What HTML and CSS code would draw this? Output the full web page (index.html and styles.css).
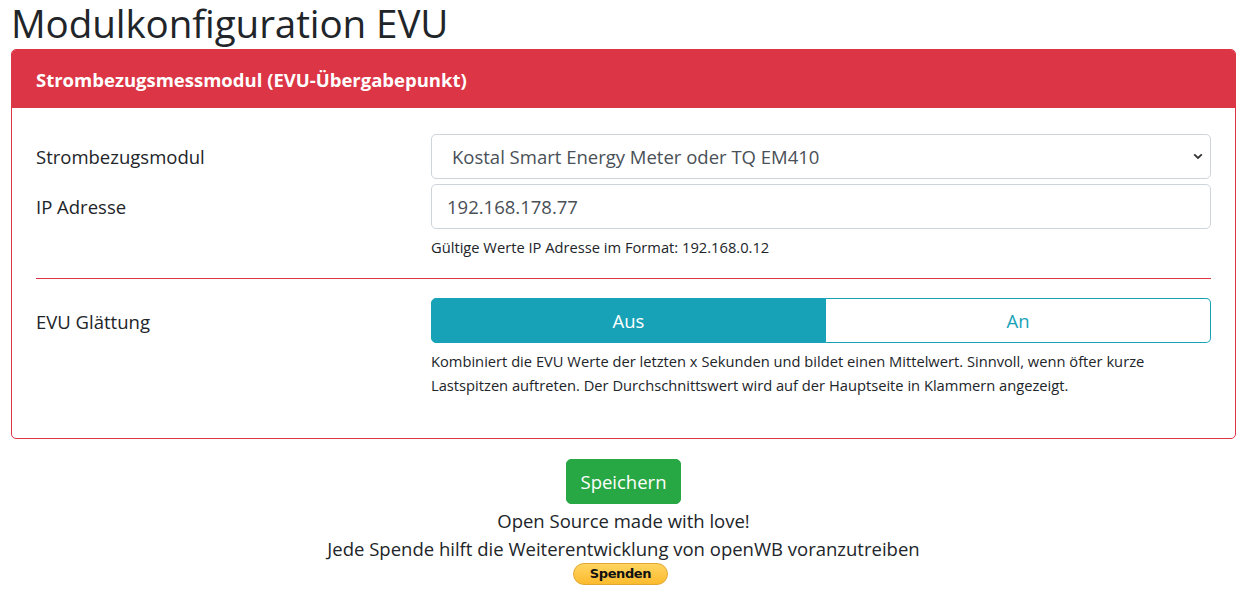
FILE: index.html
```html
<!DOCTYPE html>
<html lang="de">
<head>
<meta charset="utf-8">
<title>Modulkonfiguration EVU</title>
<link rel="stylesheet" href="styles.css">
</head>
<body>
<div class="page">
  <h1 class="title">Modulkonfiguration EVU</h1>
  <div class="card">
    <div class="card-header">Strombezugsmessmodul (EVU-Übergabepunkt)</div>
    <div class="card-body">
      <div class="form-row">
        <label class="label" for="modul">Strombezugsmodul</label>
        <div class="control">
          <div class="select-wrap">
            <select id="modul" class="field select">
              <option>Kostal Smart Energy Meter oder TQ EM410</option>
            </select>
            <svg class="chevron" width="10" height="7" viewBox="0 0 10 7"><path d="M1.2 1.3 L5 5 L8.8 1.3" fill="none" stroke="#333" stroke-width="1.8"/></svg>
          </div>
        </div>
      </div>
      <div class="form-row row-tight">
        <label class="label" for="ip">IP Adresse</label>
        <div class="control">
          <input id="ip" class="field input" type="text" value="192.168.178.77">
          <div class="help help-ip">Gültige Werte IP Adresse im Format: 192.168.0.12</div>
        </div>
      </div>
      <div class="divider"></div>
      <div class="form-row">
        <div class="label label-toggle">EVU Glättung</div>
        <div class="control">
          <div class="toggle">
            <button class="tbtn active">Aus</button>
            <button class="tbtn">An</button>
          </div>
          <div class="help help-desc">Kombiniert die EVU Werte der letzten x Sekunden und bildet einen Mittelwert. Sinnvoll, wenn öfter kurze Lastspitzen auftreten. Der Durchschnittswert wird auf der Hauptseite in Klammern angezeigt.</div>
        </div>
      </div>
    </div>
  </div>
  <div class="footer">
    <button class="save">Speichern</button>
    <div class="foot-line">Open Source made with love!</div>
    <div class="foot-line">Jede Spende hilft die Weiterentwicklung von openWB voranzutreiben</div>
    <button class="donate">Spenden</button>
  </div>
</div>
</body>
</html>
```
FILE: styles.css
```css
* { box-sizing: border-box; }
html, body { margin: 0; padding: 0; background: #fff; }
body {
  font-family: "Open Sans", "Noto Sans", sans-serif;
  color: #212529;
  font-size: 18.5px;
  line-height: 27px;
}
.page {
  width: 1256px;
  padding: 0 20px 0 11px;
}
.title {
  margin: 0 0 2px;
  font-size: 38.6px;
  font-weight: 500;
  line-height: 47px;
  letter-spacing: -0.1px;
}
.card {
  border: 1px solid #dc3545;
  border-radius: 5px;
  overflow: hidden;
}
.card-header {
  background: #dc3545;
  color: #fff;
  font-weight: 700;
  font-size: 18.5px;
  height: 58px;
  line-height: 27px;
  padding: 16px 24px 15px;
}
.card-body {
  padding: 26px 24px 41px;
}
.form-row {
  display: grid;
  grid-template-columns: 395px 1fr;
  align-items: start;
}
.row-tight { margin-top: 5px; }
.label {
  line-height: 45px;
  height: 45px;
  font-size: 18.5px;
}
.label-toggle { line-height: 47px; }
.control { min-width: 0; }
.field {
  display: block;
  width: 100%;
  height: 45px;
  border: 1px solid #ced4da;
  border-radius: 5px;
  background: #fff;
  font-family: inherit;
  font-size: 18.5px;
  color: #495057;
  line-height: 27px;
}
.select-wrap { position: relative; }
.select {
  appearance: none;
  -webkit-appearance: none;
  padding: 8px 40px 8px 20px;
}
.chevron {
  position: absolute;
  right: 8px;
  top: 19px;
}
.input {
  padding: 8px 15px;
}
.help {
  font-size: 14.7px;
  color: #212529;
}
.help-ip {
  margin-top: 6px;
  height: 24px;
  line-height: 24px;
}
.help-desc {
  margin-top: 6px;
  line-height: 24px;
}
.divider {
  height: 0;
  border-top: 1px solid #dc3545;
  margin: 19px 0 19px;
}
.toggle {
  display: flex;
  height: 45px;
}
.tbtn {
  font-family: inherit;
  font-size: 18.5px;
  border: 1px solid #17a2b8;
  background: #fff;
  color: #17a2b8;
  line-height: 27px;
  padding: 0;
}
.tbtn:first-child { flex: 0 0 395px; border-radius: 5px 0 0 5px; }
.tbtn:last-child { flex: 1 1 0; border-radius: 0 5px 5px 0; border-left: 0; }
.tbtn.active { background: #17a2b8; color: #fff; }
.footer {
  display: flex;
  flex-direction: column;
  align-items: center;
  padding-top: 20px;
}
.save {
  width: 115px;
  height: 45px;
  background: #28a745;
  border: 1px solid #28a745;
  border-radius: 5px;
  color: #fff;
  font-family: inherit;
  font-size: 18.5px;
  padding: 0;
  margin-bottom: 3px;
}
.foot-line {
  line-height: 28px;
  font-size: 18.5px;
}
.donate {
  margin-top: 0;
  margin-right: 6px;
  width: 95px;
  height: 22px;
  border-radius: 11px;
  border: 1px solid #e0a833;
  background: linear-gradient(#ffd460, #fcbb2f);
  color: #111;
  font-family: "DejaVu Sans", Verdana, sans-serif;
  font-weight: 700;
  font-size: 13px;
  letter-spacing: -0.4px;
  line-height: 20px;
  padding: 0;
}
```
